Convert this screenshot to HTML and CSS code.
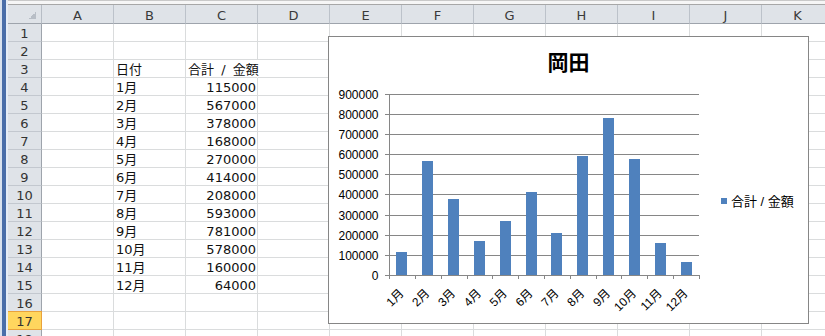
FILE: index.html
```html
<!DOCTYPE html>
<html lang="ja">
<head>
<meta charset="utf-8">
<title>Sheet</title>
<link rel="stylesheet" href="styles.css">
</head>
<body>
<div class="window">
  <div class="winbar"></div>
  <div class="main">
    <div class="topstrip"></div>
    <div class="sheet">
      <div class="corner"></div><div class="ch">A</div><div class="ch">B</div><div class="ch">C</div><div class="ch">D</div><div class="ch">E</div><div class="ch">F</div><div class="ch">G</div><div class="ch">H</div><div class="ch">I</div><div class="ch">J</div><div class="ch">K</div>

      <div class="rh">1</div><div class="c"></div><div class="c"></div><div class="c"></div><div class="c"></div><div class="c"></div><div class="c"></div><div class="c"></div><div class="c"></div><div class="c"></div><div class="c"></div><div class="c"></div>
      <div class="rh">2</div><div class="c"></div><div class="c"></div><div class="c"></div><div class="c"></div><div class="c"></div><div class="c"></div><div class="c"></div><div class="c"></div><div class="c"></div><div class="c"></div><div class="c"></div>
      <div class="rh">3</div><div class="c"></div><div class="c">日付</div><div class="c ovf">合計 / 金額</div><div class="c"></div><div class="c"></div><div class="c"></div><div class="c"></div><div class="c"></div><div class="c"></div><div class="c"></div><div class="c"></div>
      <div class="rh">4</div><div class="c"></div><div class="c">1月</div><div class="c num">115000</div><div class="c"></div><div class="c"></div><div class="c"></div><div class="c"></div><div class="c"></div><div class="c"></div><div class="c"></div><div class="c"></div>
      <div class="rh">5</div><div class="c"></div><div class="c">2月</div><div class="c num">567000</div><div class="c"></div><div class="c"></div><div class="c"></div><div class="c"></div><div class="c"></div><div class="c"></div><div class="c"></div><div class="c"></div>
      <div class="rh">6</div><div class="c"></div><div class="c">3月</div><div class="c num">378000</div><div class="c"></div><div class="c"></div><div class="c"></div><div class="c"></div><div class="c"></div><div class="c"></div><div class="c"></div><div class="c"></div>
      <div class="rh">7</div><div class="c"></div><div class="c">4月</div><div class="c num">168000</div><div class="c"></div><div class="c"></div><div class="c"></div><div class="c"></div><div class="c"></div><div class="c"></div><div class="c"></div><div class="c"></div>
      <div class="rh">8</div><div class="c"></div><div class="c">5月</div><div class="c num">270000</div><div class="c"></div><div class="c"></div><div class="c"></div><div class="c"></div><div class="c"></div><div class="c"></div><div class="c"></div><div class="c"></div>
      <div class="rh">9</div><div class="c"></div><div class="c">6月</div><div class="c num">414000</div><div class="c"></div><div class="c"></div><div class="c"></div><div class="c"></div><div class="c"></div><div class="c"></div><div class="c"></div><div class="c"></div>
      <div class="rh">10</div><div class="c"></div><div class="c">7月</div><div class="c num">208000</div><div class="c"></div><div class="c"></div><div class="c"></div><div class="c"></div><div class="c"></div><div class="c"></div><div class="c"></div><div class="c"></div>
      <div class="rh">11</div><div class="c"></div><div class="c">8月</div><div class="c num">593000</div><div class="c"></div><div class="c"></div><div class="c"></div><div class="c"></div><div class="c"></div><div class="c"></div><div class="c"></div><div class="c"></div>
      <div class="rh">12</div><div class="c"></div><div class="c">9月</div><div class="c num">781000</div><div class="c"></div><div class="c"></div><div class="c"></div><div class="c"></div><div class="c"></div><div class="c"></div><div class="c"></div><div class="c"></div>
      <div class="rh">13</div><div class="c"></div><div class="c">10月</div><div class="c num">578000</div><div class="c"></div><div class="c"></div><div class="c"></div><div class="c"></div><div class="c"></div><div class="c"></div><div class="c"></div><div class="c"></div>
      <div class="rh">14</div><div class="c"></div><div class="c">11月</div><div class="c num">160000</div><div class="c"></div><div class="c"></div><div class="c"></div><div class="c"></div><div class="c"></div><div class="c"></div><div class="c"></div><div class="c"></div>
      <div class="rh">15</div><div class="c"></div><div class="c">12月</div><div class="c num">64000</div><div class="c"></div><div class="c"></div><div class="c"></div><div class="c"></div><div class="c"></div><div class="c"></div><div class="c"></div><div class="c"></div>
      <div class="rh">16</div><div class="c"></div><div class="c"></div><div class="c"></div><div class="c"></div><div class="c"></div><div class="c"></div><div class="c"></div><div class="c"></div><div class="c"></div><div class="c"></div><div class="c"></div>
      <div class="rh sel">17</div><div class="c"></div><div class="c"></div><div class="c"></div><div class="c"></div><div class="c"></div><div class="c"></div><div class="c"></div><div class="c"></div><div class="c"></div><div class="c"></div><div class="c"></div>
      <div class="rh">18</div><div class="c"></div><div class="c"></div><div class="c"></div><div class="c"></div><div class="c"></div><div class="c"></div><div class="c"></div><div class="c"></div><div class="c"></div><div class="c"></div><div class="c"></div>
    </div>

    <div class="chart">
      <svg class="chart-svg" width="479" height="286" viewBox="0 0 479 286" xmlns="http://www.w3.org/2000/svg">
        <text class="title" x="239.5" y="32.5" text-anchor="middle">岡田</text>

        <g class="grid">
          <path d="M56 57.5H370M56 77.5H370M56 97.5H370M56 117.5H370M56 137.5H370M56 157.5H370M56 178.5H370M56 198.5H370M56 218.5H370M56 238.5H370"/>
          <path d="M60.5 57V238"/>
          <path d="M60.5 238V242M86.5 238V242M112.5 238V242M138.5 238V242M163.5 238V242M189.5 238V242M215.5 238V242M241.5 238V242M267.5 238V242M292.5 238V242M318.5 238V242M344.5 238V242M370.5 238V242"/>
        </g>

        <g class="bars">
          <rect x="67" y="215" width="11" height="23"/>
          <rect x="93" y="124" width="11" height="114"/>
          <rect x="119" y="162" width="11" height="76"/>
          <rect x="145" y="204" width="11" height="34"/>
          <rect x="171" y="184" width="11" height="54"/>
          <rect x="197" y="155" width="11" height="83"/>
          <rect x="222" y="196" width="11" height="42"/>
          <rect x="248" y="119" width="11" height="119"/>
          <rect x="274" y="81" width="11" height="157"/>
          <rect x="300" y="122" width="11" height="116"/>
          <rect x="326" y="206" width="11" height="32"/>
          <rect x="352" y="225" width="11" height="13"/>
        </g>

        <g class="ylab" text-anchor="end">
          <text x="49.5" y="62">900000</text>
          <text x="49.5" y="82">800000</text>
          <text x="49.5" y="102">700000</text>
          <text x="49.5" y="122">600000</text>
          <text x="49.5" y="142">500000</text>
          <text x="49.5" y="162">400000</text>
          <text x="49.5" y="183">300000</text>
          <text x="49.5" y="203">200000</text>
          <text x="49.5" y="223">100000</text>
          <text x="49.5" y="243">0</text>
        </g>

        <g class="xlab" text-anchor="end">
          <text transform="translate(75.4 257) rotate(-45)">1月</text>
          <text transform="translate(101.2 257) rotate(-45)">2月</text>
          <text transform="translate(127.1 257) rotate(-45)">3月</text>
          <text transform="translate(152.9 257) rotate(-45)">4月</text>
          <text transform="translate(178.7 257) rotate(-45)">5月</text>
          <text transform="translate(204.6 257) rotate(-45)">6月</text>
          <text transform="translate(230.4 257) rotate(-45)">7月</text>
          <text transform="translate(256.2 257) rotate(-45)">8月</text>
          <text transform="translate(282.1 257) rotate(-45)">9月</text>
          <text transform="translate(307.9 257) rotate(-45)">10月</text>
          <text transform="translate(333.7 257) rotate(-45)">11月</text>
          <text transform="translate(359.6 257) rotate(-45)">12月</text>
        </g>

        <rect class="legend-key" x="392" y="161" width="6" height="6"/>
        <text class="legend" x="402" y="169">合計 / 金額</text>
      </svg>
    </div>
  </div>
</div>
</body>
</html>
```

FILE: styles.css
```css
html, body {
  margin: 0;
  padding: 0;
  background: #ffffff;
  overflow: hidden;
}

.window {
  display: flex;
  width: 825px;
  height: 336px;
  overflow: hidden;
}

.winbar {
  flex: none;
  width: 8px;
  background: linear-gradient(to right, #d9e2ee 0 2px, #4a6ea9 2px 6px, #e6edf6 6px 8px);
}

.main {
  position: relative;
  flex: 1;
  overflow: hidden;
}

.topstrip {
  box-sizing: border-box;
  height: 5px;
  background: #f6f6f6;
  border-top: 1px solid #c9c9c9;
  border-bottom: 1px solid #a7a7a7;
}

.sheet {
  display: grid;
  grid-template-columns: 34px repeat(11, 72px);
  grid-template-rows: 19px;
  grid-auto-rows: 18px;
  font-family: "DejaVu Sans", "Noto Sans CJK JP", sans-serif;
  font-size: 13px;
  color: #111;
}

.sheet > div {
  box-sizing: border-box;
  border-right: 1px solid #dadcdd;
  border-bottom: 1px solid #dadcdd;
  white-space: nowrap;
  display: flex;
  align-items: flex-end;
  line-height: 14px;
}

.corner {
  background: linear-gradient(135deg, transparent 50%, #b8bec6 50%) no-repeat right 5px bottom 4px / 7px 7px, #dfe3e8;
  border-right-color: #b7bdc5 !important;
  border-bottom-color: #9ea4ac !important;
}

.sheet > .ch {
  background: #dfe3e8;
  border-right-color: #bcc2ca;
  border-bottom-color: #9ea4ac;
  justify-content: center;
  align-items: flex-start;
  padding-top: 3px;
  line-height: 15px;
  color: #3a3a3a;
}

.sheet > .rh {
  background: #dfe3e8;
  border-right-color: #9ea4ac;
  border-bottom-color: #c3c8cf;
  justify-content: center;
  color: #333;
}

.sheet > .rh.sel {
  background: #ffd65e;
  border-right-color: #e9a23c;
  border-bottom-color: #e9a23c;
  box-shadow: 0 -1px 0 #e9a23c;
}

.sheet > .c {
  padding-left: 2px;
}

.sheet > .num {
  justify-content: flex-end;
  padding-left: 0;
  padding-right: 1px;
}

.sheet > .ovf {
  overflow: visible;
  border-right-color: transparent;
  word-spacing: 3px;
  position: relative;
  z-index: 1;
}

.chart {
  position: absolute;
  left: 320px;
  top: 36px;
  width: 481px;
  height: 288px;
  box-sizing: border-box;
  border: 1px solid #868686;
  background: #ffffff;
  z-index: 2;
}

.chart-svg {
  display: block;
}

.title {
  font-family: "Noto Sans CJK JP", sans-serif;
  font-size: 21px;
  font-weight: 700;
  fill: #000;
}

.grid path {
  fill: none;
  stroke: #868686;
  stroke-width: 1;
  shape-rendering: crispEdges;
}

.bars rect {
  fill: #4f81bd;
  shape-rendering: crispEdges;
}

.ylab text {
  font-family: "Liberation Sans", sans-serif;
  font-size: 12px;
  fill: #000;
}

.xlab text {
  font-family: "Liberation Sans", "Noto Sans CJK JP", sans-serif;
  font-size: 12px;
  fill: #000;
}

.legend-key {
  fill: #4f81bd;
}

.legend {
  font-family: "Liberation Sans", "Noto Sans CJK JP", sans-serif;
  font-size: 13px;
  fill: #000;
}
```
